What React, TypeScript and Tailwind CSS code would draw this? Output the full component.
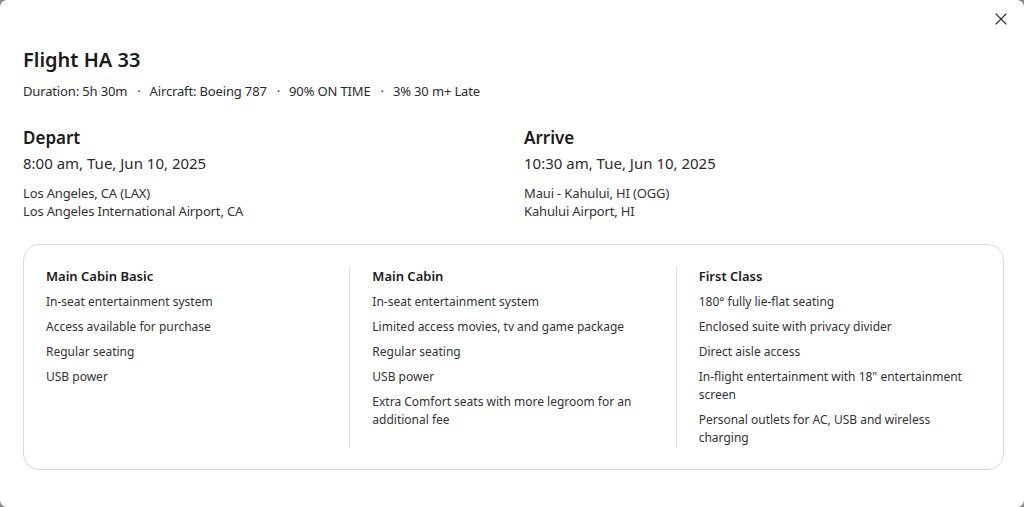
import { X } from "lucide-react";

const cabins = [
  {
    name: "Main Cabin Basic",
    items: [
      "In-seat entertainment system",
      "Access available for purchase",
      "Regular seating",
      "USB power",
    ],
  },
  {
    name: "Main Cabin",
    items: [
      "In-seat entertainment system",
      "Limited access movies, tv and game package",
      "Regular seating",
      "USB power",
      "Extra Comfort seats with more legroom for an additional fee",
    ],
  },
  {
    name: "First Class",
    items: [
      "180° fully lie-flat seating",
      "Enclosed suite with privacy divider",
      "Direct aisle access",
      'In-flight entertainment with 18" entertainment screen',
      "Personal outlets for AC, USB and wireless charging",
    ],
  },
];

const meta = ["Duration: 5h 30m", "Aircraft: Boeing 787", "90% ON TIME", "3% 30 m+ Late"];

function Leg({ title, time, city, airport }: { title: string; time: string; city: string; airport: string }) {
  return (
    <div>
      <h3 className="text-[17px] font-semibold leading-6 text-[#1a1a1a]">{title}</h3>
      <div className="mt-[1px] text-[15px] leading-6 text-[#2b2b2b]">{time}</div>
      <div className="mt-[9px] text-[13px] leading-[18px] tracking-[-0.15px] text-[#333]">
        <div>{city}</div>
        <div>{airport}</div>
      </div>
    </div>
  );
}

export default function App() {
  return (
    <div className="h-[507px] w-[1024px] bg-[#8a8a8a] font-['Noto_Sans',sans-serif]">
      <div className="relative h-full w-full rounded-[7px] bg-white pl-[23px] pt-[47px]">
        <button className="absolute right-[13px] top-[9px] text-[#333]">
          <X className="h-[20px] w-[20px]" strokeWidth={1.4} />
        </button>

        <h2 className="text-[20px] font-semibold leading-[26px] text-[#1a1a1a]">Flight HA 33</h2>
        <div className="mt-[8px] flex items-center text-[13px] leading-5 tracking-[-0.15px] text-[#2b2b2b]">
          {meta.map((m, i) => (
            <span key={m} className="flex items-center">
              {i > 0 && <span className="ml-[10px] mr-[9px]">·</span>}
              {m}
            </span>
          ))}
        </div>

        <div className="mt-[25px] grid grid-cols-[501px_1fr]">
          <Leg title="Depart" time="8:00 am, Tue, Jun 10, 2025" city="Los Angeles, CA (LAX)" airport="Los Angeles International Airport, CA" />
          <Leg title="Arrive" time="10:30 am, Tue, Jun 10, 2025" city="Maui - Kahului, HI (OGG)" airport="Kahului Airport, HI" />
        </div>

        <div className="mt-[24px] grid h-[226px] w-[981px] grid-cols-3 rounded-[16px] border border-[#dcdcdc] py-[21px]">
          {cabins.map((c, i) => (
            <div key={c.name} className={`pl-[22px] pr-[30px] ${i > 0 ? "-ml-px border-l border-[#e2e2e2]" : ""}`}>
              <h4 className="text-[13px] font-semibold leading-5 text-[#1a1a1a]">{c.name}</h4>
              <ul className="mt-[7px] space-y-[7px] text-[12px] leading-[18px] text-[#333]">
                {c.items.map((it) => (
                  <li key={it}>{it}</li>
                ))}
              </ul>
            </div>
          ))}
        </div>
      </div>
    </div>
  );
}
